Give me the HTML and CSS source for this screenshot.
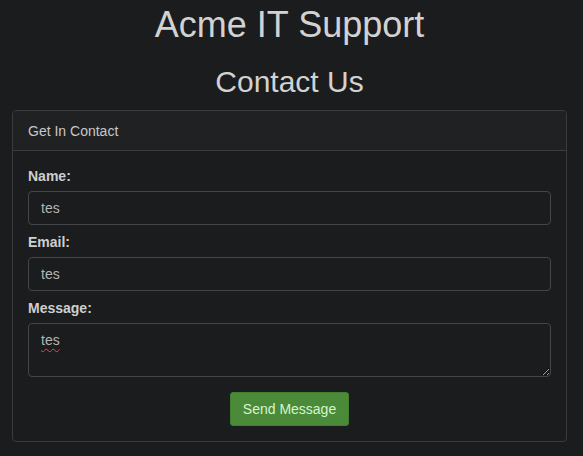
FILE: index.html
```html
<!DOCTYPE html>
<html lang="en">
<head>
  <meta charset="UTF-8" />
  <meta name="viewport" content="width=device-width, initial-scale=1.0"/>
  <title>Contact Us - Acme IT Support</title>
  <link rel="stylesheet" href="styles.css">
</head>
<body>
<div class="container">
  <h1>Acme IT Support</h1>
  <h2>Contact Us</h2>
  <div class="panel">
    <div class="panel-heading">Get In Contact</div>
    <div class="panel-body">
      <form>
        <div class="form-group">
          <label for="name">Name:</label>
          <input type="text" id="name" class="form-control" value="tes">
        </div>
        <div class="form-group">
          <label for="email">Email:</label>
          <input type="text" id="email" class="form-control" value="tes">
        </div>
        <div class="form-group">
          <label for="message">Message:</label>
          <textarea id="message" class="form-control msg" spellcheck="false">tes</textarea>
        </div>
        <div class="actions">
          <button type="button" class="btn-send">Send Message</button>
        </div>
      </form>
    </div>
  </div>
</div>
</body>
</html>
```

FILE: styles.css
```css
body {
  margin: 0;
  background-color: #1b1c1e;
  font-family: "Liberation Sans", Arial, Helvetica, sans-serif;
  font-size: 14px;
  color: #cfcfcf;
}

.container {
  padding: 0 16px 0 12px;
}

h1 {
  margin: 5px 0 0;
  font-size: 36px;
  font-weight: normal;
  line-height: 1.1;
  text-align: center;
  color: #d2d2d2;
}

h2 {
  margin: 20px 0 12px;
  font-size: 30px;
  font-weight: normal;
  line-height: 1.1;
  text-align: center;
  color: #d2d2d2;
}

.panel {
  border: 1px solid #3a3b3d;
  border-radius: 4px;
  background-color: #1b1c1e;
}

.panel-heading {
  padding: 10px 15px 9px;
  line-height: 20px;
  background-color: #202123;
  border-bottom: 1px solid #3a3b3d;
  border-radius: 3px 3px 0 0;
  color: #c8c8c8;
}

.panel-body {
  padding: 15px;
}

.form-group {
  margin-bottom: 7px;
}

label {
  display: block;
  margin-bottom: 5px;
  line-height: 20px;
  font-weight: bold;
  color: #cfcfcf;
}

.form-control {
  display: block;
  box-sizing: border-box;
  width: 100%;
  height: 34px;
  padding: 6px 12px;
  font-family: inherit;
  font-size: 14px;
  line-height: 20px;
  color: #b5b5b5;
  background-color: #1b1c1e;
  border: 1px solid #444548;
  border-radius: 4px;
}

.msg {
  height: 54px;
  text-decoration: underline wavy #d0505a;
  text-decoration-thickness: 1px;
  text-underline-offset: 3px;
}

.actions {
  margin-top: 15px;
  text-align: center;
}

.btn-send {
  height: 34px;
  padding: 6px 12px;
  font-family: inherit;
  font-size: 14px;
  color: #d6f5cf;
  background-color: #4a8a38;
  border: 1px solid #42802f;
  border-radius: 3px;
  cursor: pointer;
}
```
